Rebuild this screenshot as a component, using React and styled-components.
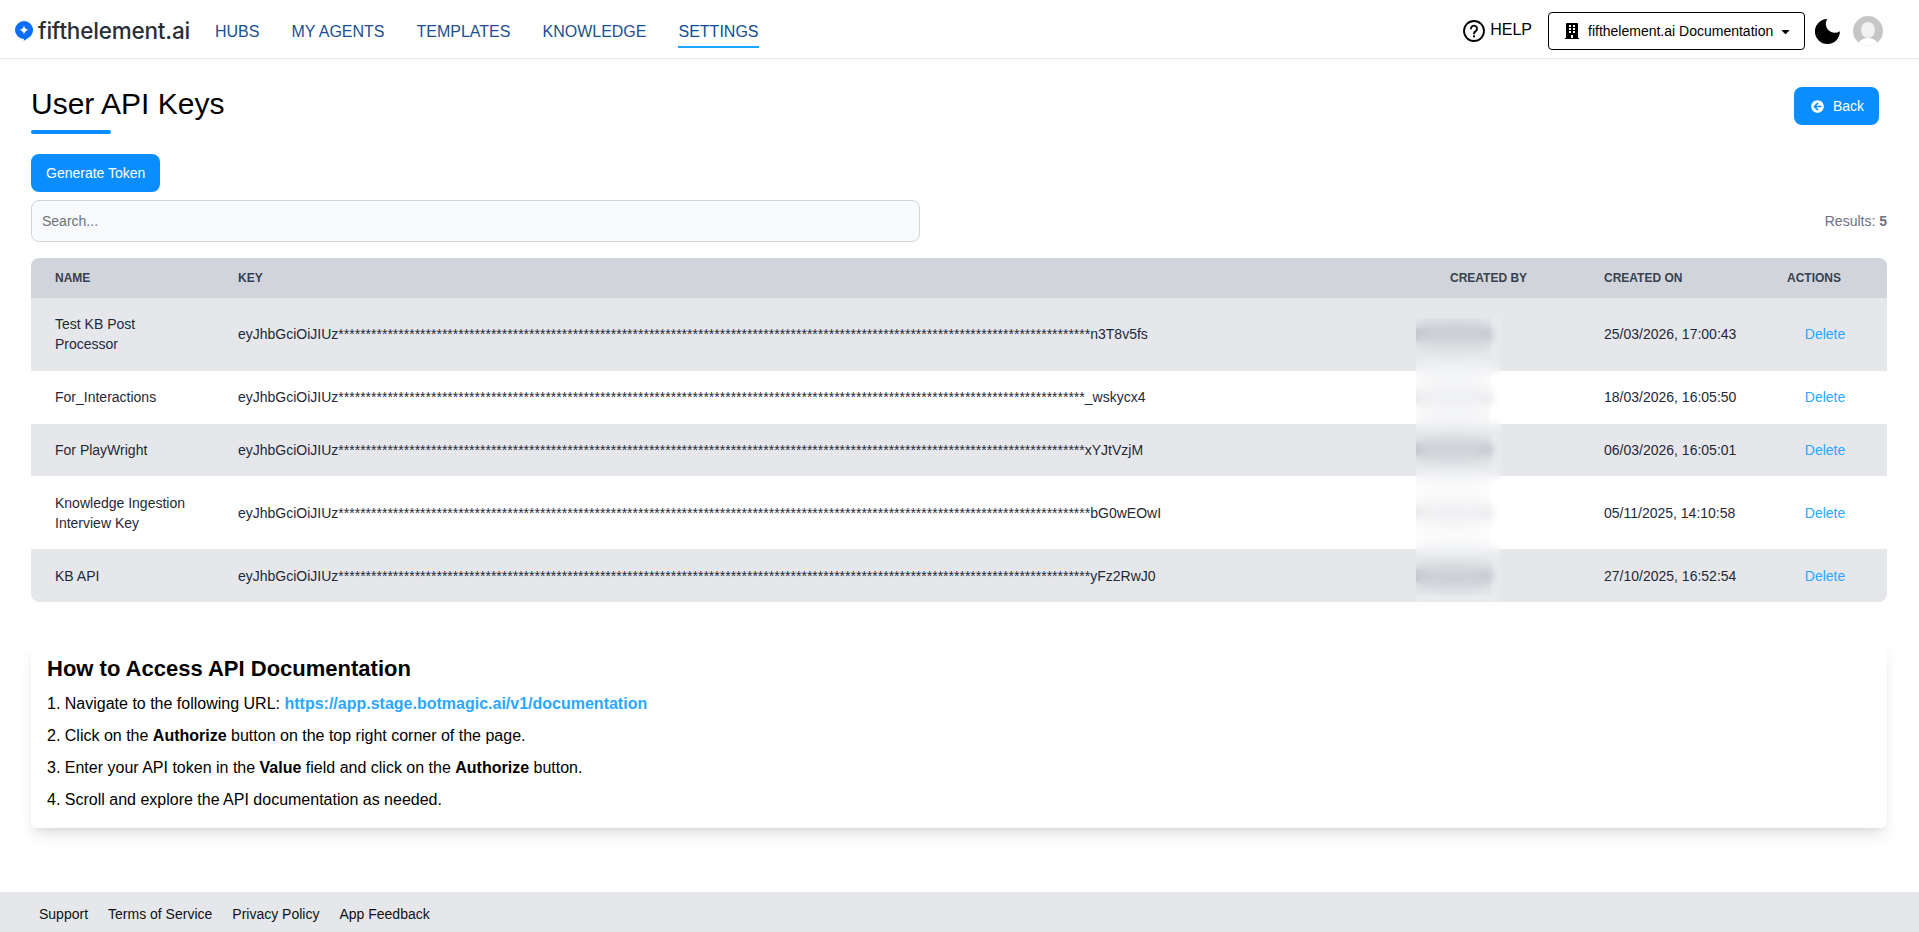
import React from "react";
import styled, { createGlobalStyle } from "styled-components";
import { FaBuilding, FaArrowCircleLeft, FaCaretDown } from "react-icons/fa";

const GlobalStyle = createGlobalStyle`
  html, body { margin: 0; padding: 0; background: #fff; }
  body { font-family: "Liberation Sans", Arial, sans-serif; color: #000; }
  * { box-sizing: border-box; }
`;

const Page = styled.div`
  min-height: 100vh;
  display: flex;
  flex-direction: column;
`;

const TopBar = styled.header`
  height: 59px;
  display: flex;
  align-items: flex-start;
  padding: 0 36px 0 15px;
  border-bottom: 1px solid #e8e9eb;
  box-shadow: 0 1px 2px rgba(0, 0, 0, 0.04);
`;

const Brand = styled.div`
  display: flex;
  align-items: center;
  gap: 5px;
  width: 200px;
  height: 62px;
`;

const BrandName = styled.span`
  font-family: Inter, sans-serif;
  font-size: 22.5px;
  font-weight: 500;
  letter-spacing: -0.2px;
  color: #2a2e35;
  line-height: 28px;
`;

const Nav = styled.nav`
  display: flex;
  gap: 32px;
  height: 48px;
  align-items: stretch;
`;

const NavLink = styled.a`
  font-size: 16px;
  color: ${(p) => (p.$active ? "#0f4d92" : "#1b4f92")};
  display: flex;
  align-items: center;
  padding-top: 18px;
  height: 48px;
  border-bottom: 2px solid ${(p) => (p.$active ? "#1aa7ff" : "transparent")};
`;

const RightGroup = styled.div`
  margin-left: auto;
  height: 62px;
  display: flex;
  align-items: center;
`;

const Help = styled.a`
  display: flex;
  align-items: center;
  gap: 5px;
  font-size: 16px;
  color: #000;
  margin-right: 16px;
`;

const HelpText = styled.span`
  position: relative;
  top: -1px;
`;

const OrgSelect = styled.button`
  width: 257px;
  height: 38px;
  display: flex;
  align-items: center;
  padding: 0 0 0 15px;
  border: 1px solid #000;
  border-radius: 4px;
  background: #fff;
  font: 14px "Liberation Sans", Arial, sans-serif;
  color: #000;
  margin-right: 10px;
`;

const OrgLabel = styled.span`
  margin: 0 6px 0 8px;
`;

const Avatar = styled.div`
  width: 30px;
  height: 30px;
  margin-left: 13px;
`;

const Main = styled.main`
  padding: 0 32px 0 31px;
`;

const TitleRow = styled.div`
  display: flex;
  justify-content: space-between;
  align-items: flex-start;
  padding-top: 28px;
`;

const Title = styled.h1`
  margin: 0;
  font-size: 30px;
  font-weight: 400;
  line-height: 34px;
  color: #000;
`;

const TitleBar = styled.div`
  width: 80px;
  height: 4px;
  border-radius: 2px;
  background: #0a8eff;
  margin-top: 9px;
`;

const PrimaryButton = styled.button`
  display: flex;
  width: fit-content;
  align-items: center;
  gap: 9px;
  height: 38px;
  border: 0;
  border-radius: 8px;
  background: #0a8eff;
  color: #fff;
  font: 14px "Liberation Sans", Arial, sans-serif;
  padding: 0 15px 0 ${(p) => p.$padLeft || 15}px;
  margin: ${(p) => p.$margin || 0};
`;

const SearchRow = styled.div`
  display: flex;
  align-items: center;
  justify-content: space-between;
  margin: 8px 0 16px;
`;

const SearchInput = styled.input`
  width: 889px;
  height: 42px;
  border: 1px solid #d1d5db;
  border-radius: 8px;
  background: #f9fafb;
  padding: 0 10px;
  font: 14px "Liberation Sans", Arial, sans-serif;
  color: #111827;
  outline: none;
  &::placeholder { color: #6b7280; opacity: 1; }
`;

const Results = styled.span`
  font-size: 14px;
  color: #6b7280;
  b { font-weight: 700; }
`;

const TableWrap = styled.div`
  position: relative;
  border-radius: 8px;
  overflow: hidden;
`;

const Table = styled.table`
  width: 100%;
  border-collapse: collapse;
  table-layout: fixed;
  font-size: 14px;
`;

const Th = styled.th`
  height: 40px;
  padding: 0 0 0 ${(p) => p.$indent || 24}px;
  background: #d1d5db;
  color: #374151;
  font-size: 12px;
  font-weight: 700;
  text-align: left;
  text-transform: uppercase;
`;

const Row = styled.tr`
  background: ${(p) => (p.$even ? "#fff" : "#e5e7eb")};
`;

const Td = styled.td`
  height: ${(p) => (p.$tall ? 72.8 : 52.8)}px;
  padding: 0 24px;
  line-height: 20px;
  color: #1f2937;
  text-align: ${(p) => (p.$center ? "center" : "left")};
  white-space: ${(p) => (p.$wrap ? "normal" : "nowrap")};
`;

const DeleteLink = styled.a`
  color: #2aa8ff;
`;

const NameBlock = styled.div`
  width: 135px;
`;

const HiddenName = styled.span`
  display: block;
  width: 75px;
  height: 13px;
  background: ${(p) => (p.$even ? "rgba(90,100,115,0.24)" : "rgba(70,80,95,0.42)")};
`;

const Redaction = styled.div`
  position: absolute;
  left: 1385px;
  top: 60px;
  width: ${(p) => p.$w}px;
  height: ${(p) => p.$h}px;
  backdrop-filter: blur(${(p) => p.$blur}px);
  background: ${(p) => p.$tint || "transparent"};
`;

const HelpCard = styled.section`
  margin-top: 39px;
  padding: 14px 16px 16px;
  border-radius: 6px;
  background: #fff;
  box-shadow: 0 10px 15px -3px rgba(0, 0, 0, 0.1), 0 4px 6px -4px rgba(0, 0, 0, 0.1);
`;

const HelpTitle = styled.h2`
  margin: 0 0 9px;
  font-size: 22px;
  line-height: 28px;
  font-weight: 700;
  color: #000;
`;

const Step = styled.p`
  margin: 8px 0 0;
  font-size: 16px;
  line-height: 24px;
  color: #000;
  a { color: #2aa8ff; font-weight: 700; }
`;

const Footer = styled.footer`
  margin-top: auto;
  height: 40px;
  background: #e5e7eb;
  display: flex;
  align-items: center;
  gap: 20px;
  padding: 3px 0 0 39px;
`;

const FooterLink = styled.a`
  font-size: 14px;
  color: #111;
`;

const stars = (n) => "*".repeat(n);

const keys = [
  { name: "Test KB Post Processor", tail: "n3T8v5fs", n: 138, on: "25/03/2026, 17:00:43", tall: true },
  { name: "For_Interactions", tail: "_wskycx4", n: 137, on: "18/03/2026, 16:05:50" },
  { name: "For PlayWright", tail: "xYJtVzjM", n: 137, on: "06/03/2026, 16:05:01" },
  { name: "Knowledge Ingestion Interview Key", tail: "bG0wEOwI", n: 138, on: "05/11/2025, 14:10:58", tall: true },
  { name: "KB API", tail: "yFz2RwJ0", n: 138, on: "27/10/2025, 16:52:54" },
];

const LogoMark = () => (
  <svg width="18" height="20" viewBox="0 0 18 20" aria-hidden="true">
    <path d="M9 0a9 9 0 0 1 4.2 16.96L8.6 20l.4-2a9 9 0 0 1 0-18Z" fill="#0d6efd" />
    <path d="M9 4.6c.5 2.6 1.8 3.9 4.4 4.4-2.6.5-3.9 1.8-4.4 4.4-.5-2.6-1.8-3.9-4.4-4.4 2.6-.5 3.9-1.8 4.4-4.4Z" fill="#fff" />
  </svg>
);

const HelpIcon = () => (
  <svg width="22" height="22" viewBox="0 0 22 22" fill="none" aria-hidden="true">
    <circle cx="11" cy="11" r="10" stroke="#000" strokeWidth="1.8" />
    <path d="M8 8.6a3 3 0 1 1 4.7 2.5c-1 .7-1.7 1.2-1.7 2.5" stroke="#000" strokeWidth="1.9" strokeLinecap="round" />
    <circle cx="11" cy="16.4" r="1.15" fill="#000" />
  </svg>
);

const MoonIcon = () => (
  <svg width="25" height="25" viewBox="3 3 18.4 18.4" aria-hidden="true">
    <path d="M12 3a6.6 6.6 0 0 0 9.3 9A9.2 9.2 0 1 1 12 3Z" fill="#000" />
  </svg>
);

const AvatarIcon = () => (
  <svg width="30" height="30" viewBox="0 0 30 30" aria-hidden="true">
    <defs>
      <clipPath id="avatarClip"><circle cx="15" cy="15" r="15" /></clipPath>
    </defs>
    <g clipPath="url(#avatarClip)">
      <rect width="30" height="30" fill="#c6c6c6" />
      <ellipse cx="15" cy="14" rx="7" ry="8" fill="#f1f1f1" />
      <path d="M4 30c1-5 6-8 11-8s10 3 11 8Z" fill="#fff" />
    </g>
  </svg>
);

export default function App() {
  return (
    <Page>
      <GlobalStyle />
      <TopBar>
        <Brand>
          <LogoMark />
          <BrandName>fifthelement.ai</BrandName>
        </Brand>
        <Nav>
          <NavLink>HUBS</NavLink>
          <NavLink>MY AGENTS</NavLink>
          <NavLink>TEMPLATES</NavLink>
          <NavLink>KNOWLEDGE</NavLink>
          <NavLink $active>SETTINGS</NavLink>
        </Nav>
        <RightGroup>
          <Help>
            <HelpIcon />
            <HelpText>HELP</HelpText>
          </Help>
          <OrgSelect>
            <FaBuilding size={16} />
            <OrgLabel>fifthelement.ai Documentation</OrgLabel>
            <FaCaretDown size={13} />
          </OrgSelect>
          <MoonIcon />
          <Avatar>
            <AvatarIcon />
          </Avatar>
        </RightGroup>
      </TopBar>

      <Main>
        <TitleRow>
          <div>
            <Title>User API Keys</Title>
            <TitleBar />
          </div>
          <PrimaryButton $padLeft={17} $margin="0 8px 0 0">
            <FaArrowCircleLeft size={13} />
            Back
          </PrimaryButton>
        </TitleRow>

        <PrimaryButton $margin="20px 0 0">Generate Token</PrimaryButton>

        <SearchRow>
          <SearchInput placeholder="Search..." />
          <Results>
            Results: <b>5</b>
          </Results>
        </SearchRow>

        <TableWrap>
          <Table>
            <colgroup>
              <col style={{ width: 183 }} />
              <col />
              <col style={{ width: 188 }} />
              <col style={{ width: 183 }} />
              <col style={{ width: 124 }} />
            </colgroup>
            <thead>
              <tr>
                <Th>Name</Th>
                <Th>Key</Th>
                <Th $indent={58}>Created By</Th>
                <Th>Created On</Th>
                <Th>Actions</Th>
              </tr>
            </thead>
            <tbody>
              {keys.map((k, i) => (
                <Row key={k.tail} $even={i % 2 === 1}>
                  <Td $wrap $tall={k.tall}>
                    <NameBlock>{k.name}</NameBlock>
                  </Td>
                  <Td>
                    eyJhbGciOiJIUz{stars(k.n)}
                    {k.tail}
                  </Td>
                  <Td>
                    <HiddenName $even={i % 2 === 1} />
                  </Td>
                  <Td>{k.on}</Td>
                  <Td $center>
                    <DeleteLink>Delete</DeleteLink>
                  </Td>
                </Row>
              ))}
            </tbody>
          </Table>
          <Redaction $w={85} $h={284} $blur={4} $tint="rgba(255,255,255,0.14)" />
          <Redaction $w={75} $h={277} $blur={11} />
        </TableWrap>

        <HelpCard>
          <HelpTitle>How to Access API Documentation</HelpTitle>
          <Step>
            1. Navigate to the following URL: <a>https://app.stage.botmagic.ai/v1/documentation</a>
          </Step>
          <Step>
            2. Click on the <b>Authorize</b> button on the top right corner of the page.
          </Step>
          <Step>
            3. Enter your API token in the <b>Value</b> field and click on the <b>Authorize</b> button.
          </Step>
          <Step>4. Scroll and explore the API documentation as needed.</Step>
        </HelpCard>
      </Main>

      <Footer>
        <FooterLink>Support</FooterLink>
        <FooterLink>Terms of Service</FooterLink>
        <FooterLink>Privacy Policy</FooterLink>
        <FooterLink>App Feedback</FooterLink>
      </Footer>
    </Page>
  );
}
